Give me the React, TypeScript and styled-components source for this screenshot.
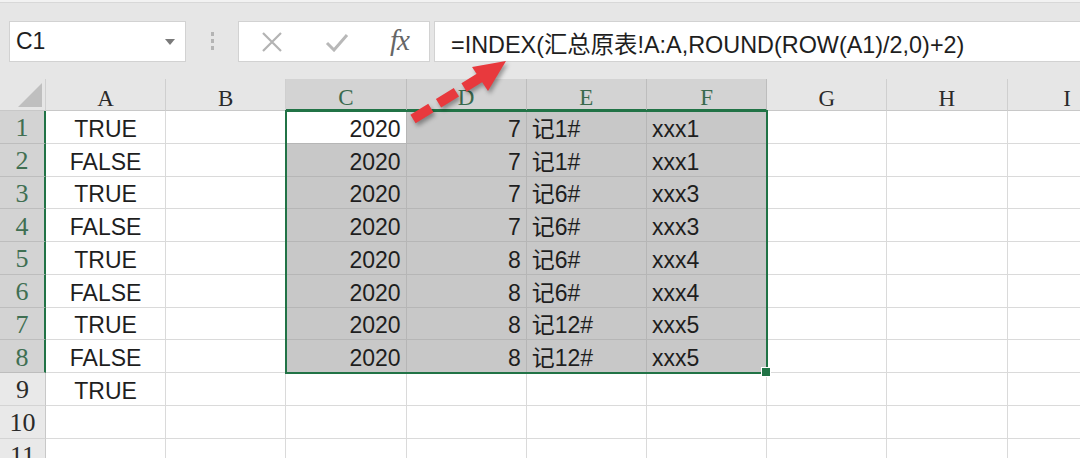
import React from 'react';
import styled, { createGlobalStyle, css } from 'styled-components';

const GREEN = '#217346';
const COL_W = 120.2;
const ROW_H = 32.75;

const GlobalStyle = createGlobalStyle`
  html, body {
    margin: 0;
    padding: 0;
    width: 1080px;
    height: 458px;
    overflow: hidden;
    background: #ffffff;
  }
  * { box-sizing: border-box; }
`;

const Page = styled.div`
  position: relative;
  width: 1080px;
  height: 458px;
  overflow: hidden;
  font-family: "Liberation Sans", "Noto Sans CJK SC", sans-serif;
  color: #1e1e1e;
`;

const TopStrip = styled.div`
  height: 3px;
  background: #f2f2f2;
  border-bottom: 1px solid #d8d8d8;
`;

const Toolbar = styled.div`
  height: 76px;
  background: #e6e6e6;
  display: flex;
  align-items: flex-start;
  padding: 18px 0 0 9px;
`;

const Box = styled.div`
  height: 41px;
  background: #ffffff;
  border: 1px solid #d2d2d2;
  display: flex;
  align-items: center;
`;

const NameBox = styled(Box)`
  width: 177px;
  justify-content: space-between;
  padding: 0 10px 0 6px;
  font-size: 23px;
`;

const Caret = styled.span`
  width: 0;
  height: 0;
  border-left: 5px solid transparent;
  border-right: 5px solid transparent;
  border-top: 6px solid #7a7a7a;
`;

const Grip = styled.div`
  margin: 11px 0 0 25px;
  display: flex;
  flex-direction: column;
  gap: 3px;
  span {
    width: 3px;
    height: 4px;
    background: #b4b4b4;
  }
`;

const FuncBox = styled(Box)`
  margin-left: 24px;
  width: 192px;
  padding: 0 20px 0 22px;
  justify-content: space-between;
`;

const FxLabel = styled.span`
  font-family: "Liberation Serif", "DejaVu Serif", serif;
  font-style: italic;
  font-size: 29px;
  color: #666666;
  letter-spacing: -1px;
  margin-top: -3px;
`;

const FormulaBox = styled(Box)`
  margin-left: 4px;
  flex: 1;
  padding: 2px 0 0 16px;
  font-size: 23.4px;
  white-space: nowrap;
  border-right: none;
`;

const Sheet = styled.div`
  position: relative;
  display: grid;
  grid-template-columns: 46px repeat(9, ${COL_W}px);
  grid-template-rows: 32px repeat(11, ${ROW_H}px);
`;

const Corner = styled.div`
  background: #e6e6e6;
  border-right: 1px solid #d0d0d0;
  border-bottom: 1px solid #c8c8c8;
  position: relative;
  &::after {
    content: '';
    position: absolute;
    right: 3px;
    bottom: 3px;
    width: 0;
    height: 0;
    border-left: 24px solid transparent;
    border-bottom: 24px solid #bfbfbf;
  }
`;

const ColHead = styled.div<{ $sel?: boolean }>`
  background: ${(p) => (p.$sel ? '#d3d3d3' : '#e6e6e6')};
  border-right: 1px solid ${(p) => (p.$sel ? '#bdbdbd' : '#cfcfcf')};
  border-bottom: ${(p) => (p.$sel ? `2px solid ${GREEN}` : '1px solid #c8c8c8')};
  color: ${(p) => (p.$sel ? '#3a6a4e' : '#2a2a2a')};
  font-family: "Liberation Serif", "DejaVu Serif", serif;
  font-size: 23px;
  line-height: 1;
  display: flex;
  align-items: center;
  justify-content: center;
  padding-top: 7px;
`;

const RowHead = styled.div<{ $sel?: boolean }>`
  background: ${(p) => (p.$sel ? '#d3d3d3' : '#e9e9e9')};
  border-bottom: 1px solid ${(p) => (p.$sel ? '#bdbdbd' : '#d4d4d4')};
  border-right: ${(p) => (p.$sel ? `2px solid ${GREEN}` : '1px solid #c8c8c8')};
  color: ${(p) => (p.$sel ? '#3f6f52' : '#2a2a2a')};
  font-family: "Liberation Serif", "DejaVu Serif", serif;
  font-size: 26px;
  line-height: 1;
  display: flex;
  align-items: center;
  justify-content: center;
  padding-top: 3px;
`;

type Align = 'left' | 'center' | 'right';

const Cell = styled.div<{ $align: Align; $sel?: boolean; $active?: boolean }>`
  border-right: 1px solid #dadada;
  border-bottom: 1px solid #dadada;
  font-size: 23px;
  line-height: 1;
  display: flex;
  align-items: center;
  padding: 5px 5px 0;
  white-space: nowrap;
  justify-content: ${(p) =>
    p.$align === 'left' ? 'flex-start' : p.$align === 'right' ? 'flex-end' : 'center'};
  ${(p) =>
    p.$sel &&
    css`
      background: ${p.$active ? '#ffffff' : '#c8c8c8'};
      border-color: #b6b6b6;
    `}
`;

const Selection = styled.div`
  position: absolute;
  left: ${46 + COL_W * 2 - 1}px;
  top: 31px;
  width: ${COL_W * 4 + 2}px;
  height: ${ROW_H * 8 + 2}px;
  border: 2px solid ${GREEN};
  pointer-events: none;
  &::after {
    content: '';
    position: absolute;
    right: -5px;
    bottom: -5px;
    width: 8px;
    height: 8px;
    background: ${GREEN};
    border: 1px solid #ffffff;
  }
`;

const ArrowLayer = styled.svg`
  position: absolute;
  left: 0;
  top: 0;
  pointer-events: none;
  filter: drop-shadow(2px 3px 2px rgba(0, 0, 0, 0.35));
`;

const COLS = ['A', 'B', 'C', 'D', 'E', 'F', 'G', 'H', 'I'];

const DATA: [string, string, string, string, string][] = [
  ['TRUE', '2020', '7', '记1#', 'xxx1'],
  ['FALSE', '2020', '7', '记1#', 'xxx1'],
  ['TRUE', '2020', '7', '记6#', 'xxx3'],
  ['FALSE', '2020', '7', '记6#', 'xxx3'],
  ['TRUE', '2020', '8', '记6#', 'xxx4'],
  ['FALSE', '2020', '8', '记6#', 'xxx4'],
  ['TRUE', '2020', '8', '记12#', 'xxx5'],
  ['FALSE', '2020', '8', '记12#', 'xxx5'],
  ['TRUE', '', '', '', ''],
  ['', '', '', '', ''],
  ['', '', '', '', ''],
];

function CrossIcon() {
  return (
    <svg width="22" height="22" viewBox="0 0 22 22">
      <path d="M2 2 L20 20 M20 2 L2 20" stroke="#b3b3b3" strokeWidth="2.2" fill="none" />
    </svg>
  );
}

function CheckIcon() {
  return (
    <svg width="24" height="20" viewBox="0 0 24 20">
      <path d="M2 11 L9 18 L22 3" stroke="#b8b8b8" strokeWidth="3" fill="none" />
    </svg>
  );
}

function RedArrow() {
  return (
    <ArrowLayer width="1080" height="458" viewBox="0 0 1080 458">
      <line
        x1="413"
        y1="119"
        x2="481"
        y2="77"
        stroke="#e8393d"
        strokeWidth="10"
        strokeDasharray="21 9"
      />
      <polygon points="506,61 472,67 488,91" fill="#e8393d" />
    </ArrowLayer>
  );
}

export default function App() {
  const rows = DATA.map((r, i) => {
    const sel = i < 8;
    const [a, c, d, e, f] = r;
    return (
      <React.Fragment key={i}>
        <RowHead $sel={sel}>{i + 1}</RowHead>
        <Cell $align="center">{a}</Cell>
        <Cell $align="left" />
        <Cell $align="right" $sel={sel} $active={i === 0}>{c}</Cell>
        <Cell $align="right" $sel={sel}>{d}</Cell>
        <Cell $align="left" $sel={sel}>{e}</Cell>
        <Cell $align="left" $sel={sel}>{f}</Cell>
        <Cell $align="left" />
        <Cell $align="left" />
        <Cell $align="left" />
      </React.Fragment>
    );
  });

  return (
    <Page>
      <GlobalStyle />
      <TopStrip />
      <Toolbar>
        <NameBox>
          <span>C1</span>
          <Caret />
        </NameBox>
        <Grip>
          <span />
          <span />
          <span />
        </Grip>
        <FuncBox>
          <CrossIcon />
          <CheckIcon />
          <FxLabel>fx</FxLabel>
        </FuncBox>
        <FormulaBox>=INDEX(汇总原表!A:A,ROUND(ROW(A1)/2,0)+2)</FormulaBox>
      </Toolbar>
      <Sheet>
        <Corner />
        {COLS.map((c, i) => (
          <ColHead key={c} $sel={i >= 2 && i <= 5}>
            {c}
          </ColHead>
        ))}
        {rows}
        <Selection />
      </Sheet>
      <RedArrow />
    </Page>
  );
}
